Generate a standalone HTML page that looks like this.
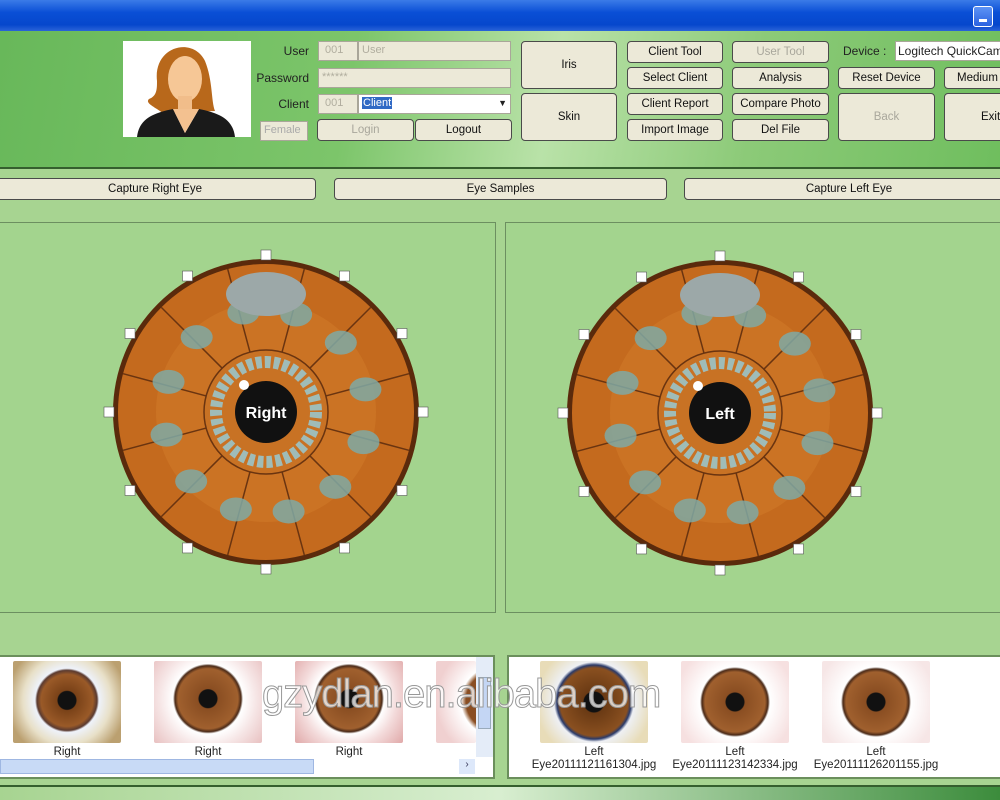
<!DOCTYPE html>
<html><head><meta charset="utf-8"><style>
*{margin:0;padding:0;box-sizing:border-box}
body{width:1000px;height:800px;overflow:hidden;background:#a7d491;font-family:"Liberation Sans",Tahoma,sans-serif;font-size:12px;color:#222;position:relative}
.abs{position:absolute}
.title{left:0;top:0;width:1000px;height:31px;background:linear-gradient(#3b7be8,#0a4fd6 40%,#0647cc 80%,#2a63d8)}
.minb{left:973px;top:6px;width:20px;height:21px;border:1px solid #fff;border-radius:3px;background:linear-gradient(#5d93f5,#2b62e0)}
.minb:after{content:"";position:absolute;left:5px;top:12px;width:8px;height:3px;background:#fff}
.head{left:0;top:31px;width:1000px;height:138px;background:linear-gradient(100deg,#68b85a 0%,#7cc56a 35%,#b9e2a8 55%,#8cca78 75%,#6fbe5e 100%);border-bottom:2px solid #355f2e}
.btn{position:absolute;background:#ece9d8;border:1px solid #4a4a4a;border-radius:4px;text-align:center;font-size:11.5px;color:#111;display:flex;align-items:center;justify-content:center;white-space:nowrap}
.dis{color:#a9a79c}
.fld{position:absolute;background:#ece9d8;border:1px solid #a9a699;height:20px;font-size:11px;color:#b1ae9f;padding:2px 3px;white-space:nowrap;overflow:hidden}
.lbl{position:absolute;font-size:12px;color:#222;text-align:right;width:60px}
.panel{position:absolute;top:222px;height:391px;background:#a3d48e;border:1px solid #6c8f60}
.strip{position:absolute;top:655px;height:124px;background:#fff;border:2px solid #6b8f5c}
.thumb{position:absolute;top:4px;width:108px;height:82px;border-radius:2px}
.cap{position:absolute;font-size:11.5px;text-align:center;width:140px;line-height:13px}
</style></head><body>
<div class="abs title"></div><div class="abs minb"></div>
<div class="abs head"></div>
<div class="abs" style="left:123px;top:41px;width:128px;height:96px;background:#fff;overflow:hidden">
<svg width="128" height="96"><path d="M34 40 C30 5 70 -5 82 20 C90 40 88 60 92 70 L40 72 C30 65 22 62 26 58 C34 55 34 48 34 40Z" fill="#b8681b"/><ellipse cx="62" cy="38" rx="17" ry="23" fill="#f6c796"/><rect x="55" y="55" width="14" height="18" fill="#f1bd8a"/><path d="M14 96 C16 78 30 72 50 68 L62 92 L76 68 C96 72 110 78 112 96Z" fill="#1a1a1a"/><path d="M50 68 L62 92 L76 68Z" fill="#f3c190"/></svg></div>
<div class="lbl" style="left:249px;top:44px">User</div>
<div class="lbl" style="left:249px;top:71px">Password</div>
<div class="lbl" style="left:249px;top:97px">Client</div>
<div class="fld" style="left:318px;top:41px;width:40px">&nbsp;001</div>
<div class="fld" style="left:358px;top:41px;width:153px">User</div>
<div class="fld" style="left:318px;top:68px;width:193px">******</div>
<div class="fld" style="left:318px;top:94px;width:40px">&nbsp;001</div>
<div class="fld" style="left:358px;top:94px;width:153px;background:#fff;color:#fff"><span style="background:#316ac5;padding:0 1px">Client</span><span style="position:absolute;right:3px;top:3px;color:#222;font-size:9px">▼</span></div>
<div class="fld" style="left:260px;top:121px;width:48px;color:#aaa">Female</div>
<div class="btn dis" style="left:317px;top:119px;width:97px;height:22px">Login</div>
<div class="btn" style="left:415px;top:119px;width:97px;height:22px">Logout</div>
<div class="btn" style="left:521px;top:41px;width:96px;height:48px">Iris</div>
<div class="btn" style="left:521px;top:93px;width:96px;height:48px">Skin</div>
<div class="btn" style="left:627px;top:41px;width:96px;height:22px">Client Tool</div>
<div class="btn" style="left:627px;top:67px;width:96px;height:22px">Select Client</div>
<div class="btn" style="left:627px;top:93px;width:96px;height:22px">Client Report</div>
<div class="btn" style="left:627px;top:119px;width:96px;height:22px">Import Image</div>
<div class="btn dis" style="left:732px;top:41px;width:97px;height:22px">User Tool</div>
<div class="btn" style="left:732px;top:67px;width:97px;height:22px">Analysis</div>
<div class="btn" style="left:732px;top:93px;width:97px;height:22px">Compare Photo</div>
<div class="btn" style="left:732px;top:119px;width:97px;height:22px">Del File</div>
<div class="abs" style="left:843px;top:44px;font-size:12px">Device :</div>
<div class="fld" style="left:895px;top:41px;width:110px;background:#fff;color:#222;font-size:12px;padding:2px 2px">Logitech QuickCam</div>
<div class="btn" style="left:838px;top:67px;width:97px;height:22px">Reset Device</div>
<div class="btn" style="left:944px;top:67px;width:70px;height:22px;justify-content:flex-start;padding-left:12px">Medium</div>
<div class="btn dis" style="left:838px;top:93px;width:97px;height:48px">Back</div>
<div class="btn" style="left:944px;top:93px;width:70px;height:48px;justify-content:flex-start;padding-left:36px">Exit</div>
<div class="btn" style="left:-6px;top:178px;width:322px;height:22px">Capture Right Eye</div>
<div class="btn" style="left:334px;top:178px;width:333px;height:22px">Eye Samples</div>
<div class="btn" style="left:684px;top:178px;width:330px;height:22px">Capture Left Eye</div>
<div class="panel" style="left:-2px;width:498px"></div>
<div class="panel" style="left:505px;width:500px"></div>
<svg class="abs" id="irissvg" style="left:0;top:0" width="1000" height="800"></svg>
<div class="strip" style="left:-2px;width:497px">
 <div class="thumb" style="left:13px;background:radial-gradient(circle at 50% 48%,#111 0 9px,#7a4218 10px,#9a5a28 26px,#5a3a30 30px,#eef2fa 32px,#e8e0c8 44px,#bba070 60px)"></div>
 <div class="thumb" style="left:154px;background:radial-gradient(circle at 50% 46%,#111 0 9px,#8a4e22 10px,#a0602e 30px,#4a2a18 33px,#fff 35px,#f6e6e6 48px,#e8c0c0 70px)"></div>
 <div class="thumb" style="left:295px;background:radial-gradient(circle at 50% 46%,#111 0 9px,#8a4e22 10px,#a0602e 30px,#4a2a18 33px,#fff 35px,#f3dada 48px,#e0a8a8 70px)"></div>
 <div class="thumb" style="left:436px;width:40px;background:radial-gradient(circle at 60px 40px,#8a4e22 30px,#fff 35px,#f0d0d0 60px)"></div>
 <div class="cap" style="left:-3px;top:89px">Right</div><div class="cap" style="left:138px;top:89px">Right</div><div class="cap" style="left:279px;top:89px">Right</div>
 <div class="abs" style="left:476px;top:0;width:17px;height:100px;background:#e4ecf8"><div style="margin:20px 2px;height:52px;background:#c4d6f4;border:1px solid #9ab"></div></div>
 <div class="abs" style="left:0;top:102px;width:314px;height:15px;background:#c8daf6;border:1px solid #9fb7e2"></div>
 <div class="abs" style="left:459px;top:102px;width:16px;height:15px;background:#dde8fa;font-size:10px;color:#335;text-align:center">›</div>
</div>
<div class="strip" style="left:507px;width:500px">
 <div class="thumb" style="left:31px;background:radial-gradient(circle at 50% 50%,#111 0 10px,#6a3a14 11px,#8a5020 34px,#2a3a6a 37px,#eef0f4 40px,#e8dcb8 58px)"></div>
 <div class="thumb" style="left:172px;background:radial-gradient(circle at 50% 50%,#111 0 9px,#8a4e22 10px,#a0602e 30px,#4a2a18 33px,#fff 35px,#f6e0e0 60px)"></div>
 <div class="thumb" style="left:313px;background:radial-gradient(circle at 50% 50%,#111 0 9px,#8a4e22 10px,#a0602e 30px,#4a2a18 33px,#fff 35px,#f6e6e6 60px)"></div>
 <div class="cap" style="left:15px;top:89px">Left<br>Eye20111121161304.jpg</div>
 <div class="cap" style="left:156px;top:89px">Left<br>Eye20111123142334.jpg</div>
 <div class="cap" style="left:297px;top:89px">Left<br>Eye20111126201155.jpg</div>
</div>
<div class="abs" style="left:262px;top:672px;font-size:40px;color:rgba(255,255,255,0.75);-webkit-text-stroke:1px #999;letter-spacing:-1px">gzydlan.en.alibaba.com</div>
<div class="abs" style="left:0;top:785px;width:1000px;height:15px;background:linear-gradient(90deg,#a7d491,#d8eed0 50%,#3c8c3c);border-top:2px solid #355f2e"></div>
<script>
var s=document.getElementById('irissvg'),h='';
function iris(cx,cy,label){
 h+='<circle cx="'+cx+'" cy="'+cy+'" r="153" fill="#5a2a0c"/>';
 h+='<circle cx="'+cx+'" cy="'+cy+'" r="148" fill="#c46a1e"/>';
 h+='<circle cx="'+cx+'" cy="'+cy+'" r="110" fill="#d07a28" opacity=".6"/>';
 for(var i=0;i<12;i++){var a=(i*30+15)*Math.PI/180;
  h+='<line x1="'+(cx+62*Math.cos(a))+'" y1="'+(cy+62*Math.sin(a))+'" x2="'+(cx+148*Math.cos(a))+'" y2="'+(cy+148*Math.sin(a))+'" stroke="#6a3410" stroke-width="1.5"/>';
  var b=i*30*Math.PI/180,r=102;
  h+='<ellipse cx="'+(cx+r*Math.cos(b+0.3))+'" cy="'+(cy+r*Math.sin(b+0.3))+'" rx="16" ry="12" fill="#7fa9a4" opacity=".85"/>';
  var t=(i*30-90)*Math.PI/180;
  h+='<rect x="'+(cx+157*Math.cos(t)-5)+'" y="'+(cy+157*Math.sin(t)-5)+'" width="10" height="10" fill="#fff" stroke="#555" stroke-width=".6"/>';
 }
 h+='<ellipse cx="'+cx+'" cy="'+(cy-118)+'" rx="40" ry="22" fill="#9ca8a8"/>';
 h+='<circle cx="'+cx+'" cy="'+cy+'" r="62" fill="#c87224" stroke="#6a3410" stroke-width="1.5"/>';
 h+='<circle cx="'+cx+'" cy="'+cy+'" r="50" fill="none" stroke="#9fbcb8" stroke-width="12" stroke-dasharray="6 3"/>';
 h+='<circle cx="'+cx+'" cy="'+cy+'" r="31" fill="#111"/>';
 h+='<circle cx="'+(cx-22)+'" cy="'+(cy-27)+'" r="5" fill="#fff"/>';
 h+='<text x="'+cx+'" y="'+(cy+6)+'" fill="#fff" font-family="Liberation Sans" font-weight="bold" font-size="16" text-anchor="middle">'+label+'</text>';
}
iris(266,412,'Right');iris(720,413,'Left');
s.innerHTML=h;
</script>
</body></html>
